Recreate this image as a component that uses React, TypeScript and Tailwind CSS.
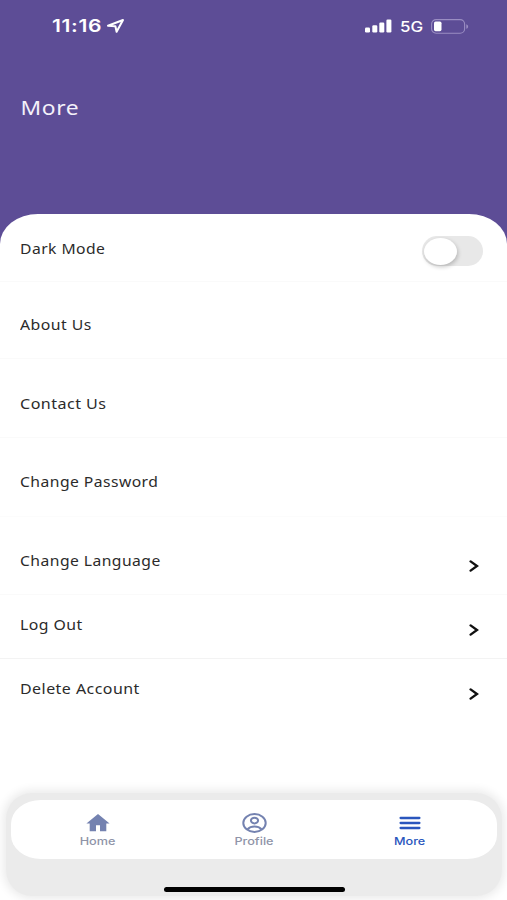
import clsx from 'clsx';

const rows = [
  { label: 'Dark Mode', height: 'h-[68px]', pad: 'pt-[23px]', width: 'scale-x-[1.12]', line: 'border-[#fafafa]', kind: 'toggle' },
  { label: 'About Us', height: 'h-[77px]', pad: 'pt-[31px]', width: 'scale-x-[1.13]', line: 'border-[#fafafa]', kind: 'plain' },
  { label: 'Contact Us', height: 'h-[79px]', pad: 'pt-[33px]', width: 'scale-x-[1.15]', line: 'border-[#fafafa]', kind: 'plain' },
  { label: 'Change Password', height: 'h-[79px]', pad: 'pt-[32px]', width: 'scale-x-[1.12]', line: 'border-[#fcfcfc]', kind: 'plain' },
  { label: 'Change Language', height: 'h-[78px]', pad: 'pt-[32px]', width: 'scale-x-[1.12]', line: 'border-[#fafafa]', kind: 'link' },
  { label: 'Log Out', height: 'h-[64px]', pad: 'pt-[18px]', width: 'scale-x-[1.13]', line: 'border-[#f3f3f3]', kind: 'link' },
  { label: 'Delete Account', height: 'h-[64px]', pad: 'pt-[18px]', width: 'scale-x-[1.14]', line: 'border-transparent', kind: 'link' },
];

function StatusBar() {
  return (
    <div className="flex h-[52px] items-center pl-[52px] pr-[38px] text-white">
      <span className="w-[50px] origin-left scale-x-[1.24] whitespace-nowrap font-['Inter'] text-[17px] font-semibold leading-none tracking-[0.5px]">
        11:16
      </span>
      <svg className="ml-[4px] h-[16px] w-[19px]" viewBox="0 0 19 16" fill="none" stroke="currentColor" strokeWidth="2" strokeLinejoin="round">
        <path d="M2 7.8 17 2 10.6 13.8 9.4 8.2Z" />
      </svg>
      <div className="flex-1" />
      <svg className="h-[14px] w-[27px]" viewBox="0 0 27 14" fill="currentColor">
        <rect x="0" y="8.5" width="5" height="5" rx="1.2" />
        <rect x="7.3" y="6.2" width="5" height="7.3" rx="1.2" />
        <rect x="14.3" y="3.5" width="5" height="10" rx="1.2" />
        <rect x="21.4" y="0.5" width="5" height="13" rx="1.2" />
      </svg>
      <span className="ml-[8px] w-[23px] origin-left scale-x-[1.13] font-['Inter'] text-[15px] font-medium leading-none">5G</span>
      <svg className="ml-[8px] h-[15px] w-[38px]" viewBox="0 0 38 15">
        <rect x="0.6" y="0.6" width="33" height="13.6" rx="4.5" fill="none" stroke="#9a8dc2" strokeWidth="1.1" />
        <rect x="3" y="2.6" width="7.5" height="9.6" rx="1.6" fill="#fff" />
        <path d="M35.3 5.2c2.4.8 2.4 3.8 0 4.6Z" fill="#9a8dc2" />
      </svg>
    </div>
  );
}

function Toggle() {
  return (
    <div className="mt-[-1px] flex h-[30px] w-[61px] items-center rounded-full bg-[#e8e8e8] pl-[2px]">
      <div className="h-[27px] w-[33px] rounded-[50%] bg-white shadow-[1px_2px_4px_rgba(0,0,0,0.22)]" />
    </div>
  );
}

function Chevron() {
  return (
    <svg className="mr-[4px] mt-[10px] h-[14px] w-[11px]" viewBox="0 0 11 14" fill="none" stroke="#111" strokeWidth="2.4" strokeLinecap="round">
      <path d="M2.6 2.4 9 7 2.6 11.6" />
    </svg>
  );
}

function HomeIcon() {
  return (
    <svg className="h-[18px] w-[24px]" viewBox="0 0 24 18" fill="#7482b0">
      <path d="M12 0 .4 9.5H3.7V17.3H10V11.2h4v6.1h6.3V9.5h3.3Z" />
    </svg>
  );
}

function ProfileIcon() {
  return (
    <svg className="h-[20px] w-[25px]" viewBox="0 0 25 20" fill="none" stroke="#7482b0" strokeWidth="2">
      <ellipse cx="12.5" cy="10" rx="11.2" ry="8.9" />
      <ellipse cx="12.5" cy="7.6" rx="3.6" ry="2.8" />
      <path d="M5.5 16.2c3.4-3.6 10.6-3.6 14 0" />
    </svg>
  );
}

function MenuIcon() {
  return (
    <svg className="h-[14px] w-[22px]" viewBox="0 0 22 14" stroke="#2a56bd" strokeWidth="2.3" strokeLinecap="round">
      <path d="M1.6 2H20.4M1.6 7H20.4M1.6 12H20.4" />
    </svg>
  );
}

const tabs = [
  { label: 'Home', icon: <HomeIcon />, color: 'text-[#8f94a8]' },
  { label: 'Profile', icon: <ProfileIcon />, color: 'text-[#8f94a8]' },
  { label: 'More', icon: <MenuIcon />, color: 'text-[#2a56bd]' },
];

export default function App() {
  return (
    <div className="flex h-[900px] w-[507px] flex-col overflow-hidden bg-white font-['Noto_Sans',sans-serif]">
      {/* Header */}
      <header className="h-[250px] shrink-0 bg-[#5d4d96]">
        <StatusBar />
        <h1 className="mt-[42px] w-fit origin-left scale-x-[1.14] pl-[18px] text-[20px] leading-[28px] tracking-[0.5px] text-[#f4f1fa]">
          More
        </h1>
      </header>

      {/* Settings list */}
      <main className="-mt-[36px] flex-1 rounded-t-[38px_30px] bg-white">
        {rows.map((row) => (
          <div
            key={row.label}
            className={clsx('flex items-start justify-between border-b pl-[20px] pr-[24px]', row.height, row.pad, row.line)}
          >
            <span className={clsx('origin-left whitespace-nowrap text-[14px] leading-[24px] tracking-[0.4px] text-[#2b2b2b]', row.width)}>
              {row.label}
            </span>
            {row.kind === 'toggle' && <Toggle />}
            {row.kind === 'link' && <Chevron />}
          </div>
        ))}
      </main>

      {/* Bottom navigation */}
      <footer className="ml-[6px] mr-[5px] mb-[4px] flex h-[103px] shrink-0 flex-col items-center rounded-[26px] bg-[#ebebeb] pt-[7px] shadow-[0_0_10px_3px_#ebebeb]">
        <nav className="flex h-[59px] w-[486px] justify-around rounded-[30px_/_24px] bg-white px-[9px]">
          {tabs.map((tab) => (
            <div key={tab.label} className="flex w-[156px] flex-col items-center pt-[12px]">
              <div className="flex h-[22px] items-center">{tab.icon}</div>
              <span className={clsx("scale-x-[1.15] font-['Inter'] text-[11px] font-medium leading-[14px]", tab.color)}>
                {tab.label}
              </span>
            </div>
          ))}
        </nav>
        <div className="mt-[28px] h-[5px] w-[181px] rounded-full bg-black" />
      </footer>
    </div>
  );
}
